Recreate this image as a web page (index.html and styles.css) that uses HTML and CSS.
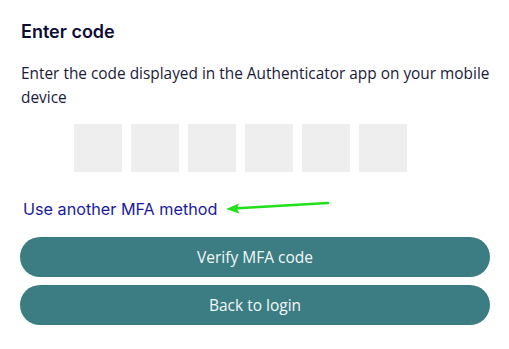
FILE: index.html
```html
<!DOCTYPE html>
<html>
<head>
<meta charset="utf-8">
<link rel="stylesheet" href="styles.css">
</head>
<body>
<div class="card">
  <h1 class="title">Enter code</h1>
  <p class="desc">Enter the code displayed in the Authenticator app on your mobile device</p>
  <div class="code">
    <div class="digit"></div>
    <div class="digit"></div>
    <div class="digit"></div>
    <div class="digit"></div>
    <div class="digit"></div>
    <div class="digit"></div>
  </div>
  <div class="link-row">
    <a class="link" href="#">Use another MFA method</a>
    <svg class="arrow" width="110" height="16" viewBox="0 0 110 16">
      <path d="M105 4 L10 9.5" stroke="#22e01a" stroke-width="2.6" stroke-linecap="round" fill="none"/>
      <path d="M3 10 L16 4.5 L14 9.8 L16.5 14.5 Z" fill="#22e01a"/>
    </svg>
  </div>
  <div class="actions">
    <button class="btn">Verify MFA code</button>
    <button class="btn">Back to login</button>
  </div>
</div>
</body>
</html>
```
FILE: styles.css
```css
html, body {
  margin: 0;
  padding: 0;
  background: #ffffff;
}
.card {
  padding: 20px 19px 0 20px;
  display: flex;
  flex-direction: column;
}
.title {
  margin: 0;
  font-family: Inter, "Liberation Sans", sans-serif;
  font-weight: 600;
  font-size: 18px;
  line-height: 24px;
  color: #0d0d35;
  padding-left: 1px;
}
.desc {
  margin: 18px 0 0 0;
  font-family: "Open Sans", "Noto Sans", sans-serif;
  font-size: 15.4px;
  line-height: 24px;
  color: #1a1a3c;
  padding-left: 1px;
}
.code {
  margin-top: 14px;
  margin-left: 54px;
  display: flex;
  gap: 9px;
}
.digit {
  width: 48px;
  height: 48px;
  background: #eeeeee;
}
.link-row {
  margin-top: 27px;
  position: relative;
  height: 20px;
  padding-left: 3px;
}
.link {
  font-family: Inter, "Liberation Sans", sans-serif;
  font-size: 16.2px;
  line-height: 20px;
  color: #1a1aa0;
  text-decoration: none;
}
.arrow {
  position: absolute;
  left: 203px;
  top: 0px;
}
.actions {
  margin-top: 18px;
  display: flex;
  flex-direction: column;
  gap: 8px;
}
.btn {
  height: 40px;
  border: none;
  border-radius: 20px;
  background: #3b7d83;
  color: #f4f8f8;
  font-family: "Open Sans", "Noto Sans", sans-serif;
  font-size: 15.5px;
  padding: 0;
}
```
